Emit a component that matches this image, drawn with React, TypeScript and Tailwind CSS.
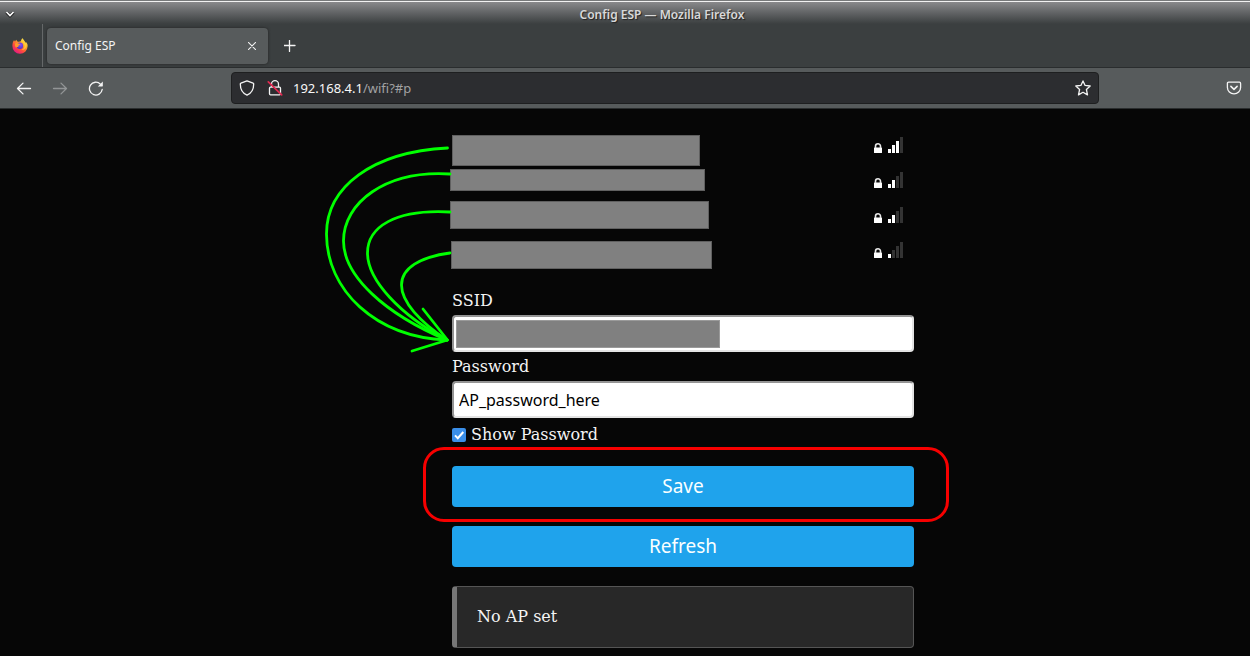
import { useState } from "react";

function FirefoxLogo() {
  return (
    <svg viewBox="0 0 16 16" className="size-4" aria-hidden="true">
      <defs>
        <linearGradient id="flame" x1="0.85" y1="0.05" x2="0.2" y2="0.95">
          <stop offset="0" stopColor="#fff44f" />
          <stop offset="0.35" stopColor="#ffa32a" />
          <stop offset="0.65" stopColor="#ff4f3a" />
          <stop offset="1" stopColor="#e31587" />
        </linearGradient>
        <radialGradient id="globe" cx="0.6" cy="0.35" r="0.7">
          <stop offset="0" stopColor="#8a50f5" />
          <stop offset="1" stopColor="#4a2fc0" />
        </radialGradient>
      </defs>
      <path
        d="M15.4 6.2c-.4-1-1.1-1.8-1.8-2.1.3.6.5 1 .5 1.3C13.300 3.600 11.800 2.600 10.700.2c-1 .6-1.700 1.900-1.800 3.100-.7 0-1.400.2-2 .5C5.600 3.600 4.700 3.300 4.500 1.700c-.7.4-1.200 1-1.400 1.700-.4 0-.9-.6-1-1.400C1 3.300.4 5.600.4 8a7.600 7.600 0 0 0 15.200.3c0-.7 0-1.400-.2-2.100z"
        fill="url(#flame)"
      />
      <circle cx="7.9" cy="7.800" r="3.200" fill="url(#globe)" />
      <path d="M3.200 5.400c1.300-.7 2.700-.4 3.600.2.500.4 1.600.4 1.600.4 0 .7-1.500 1-1.800 1.500-.2.600.1 1.400-.7 1.600-.8-.2-1.500 0-1.900.5-1-1.200-1.300-2.900-.8-4.200z" fill="#ff9a2c" />
      <path d="M9.300 3.400c2.300.7 3.700 2.800 3.200 5.200-.3 1.700-1.700 3-3.300 3.300 3 .7 5.300-1.600 5.200-4.300-.1-2.300-2.200-4.300-5.100-4.200z" fill="#ffd43a" opacity="0.75" />
    </svg>
  );
}

const line = {
  fill: "none",
  stroke: "currentColor",
  strokeWidth: 1.3,
  strokeLinecap: "round" as const,
  strokeLinejoin: "round" as const,
};

function Arrow({ flip = false }: { flip?: boolean }) {
  return (
    <svg viewBox="0 0 16 16" className={flip ? "size-4 -scale-x-100" : "size-4"} aria-hidden="true">
      <path d="M14.500 8.500H1.600M7 3.100 1.500 8.500 7 13.900" {...line} />
    </svg>
  );
}

function Reload() {
  return (
    <svg viewBox="0 0 16 16" className="size-4" aria-hidden="true">
      <path d="M14.200 9.500A6.400 6.400 0 1 1 12.400 4.100" {...line} />
      <path d="M14.800 1.500v4.600c0 .3-.2.500-.5.500H9.800z" fill="currentColor" />
    </svg>
  );
}

function Shield() {
  return (
    <svg viewBox="0 0 16 16" className="size-4" aria-hidden="true">
      <path d="M8 .9 14.100 3.200c.4.100.6.500.6.900C14.700 9.500 12 13.500 8 15.200 4 13.500 1.300 9.500 1.300 4.100c0-.4.2-.8.6-.9z" {...line} />
    </svg>
  );
}

function InsecureLock() {
  return (
    <svg viewBox="0 0 16 16" className="size-4" aria-hidden="true">
      <path d="M4.500 7V4.200a3.500 3.500 0 0 1 7 0V7M3.500 7.200h9c.6 0 1 .4 1 1v5.600c0 .6-.4 1-1 1h-9c-.6 0-1-.4-1-1V8.200c0-.6.4-1 1-1z" {...line} />
      <path d="M1.300 1.800 14.700 14.800" stroke="#e22850" strokeWidth="1.700" strokeLinecap="round" />
    </svg>
  );
}

function Star() {
  return (
    <svg viewBox="0 0 16 16" className="size-4" aria-hidden="true">
      <path d="M8 .9 10.100 5.400 15.200 6 11.400 9.500 12.500 14.900 8 12.300 3.500 14.900 4.600 9.500.8 6 5.900 5.400z" {...line} />
    </svg>
  );
}

function Pocket() {
  return (
    <svg viewBox="0 0 16 16" className="size-4" aria-hidden="true">
      <path d="M2.600 2.200h10.800c.7 0 1.200.5 1.200 1.200V7.500a6.600 6.400 0 0 1-13.200 0V3.400c0-.7.500-1.200 1.200-1.200z" {...line} />
      <path d="M4.900 6.400 8 9.300 11.100 6.400" {...line} strokeWidth={1.600} />
    </svg>
  );
}

function Padlock() {
  return (
    <svg viewBox="0 0 8 10" className="h-[10px] w-2" aria-hidden="true">
      <rect x="0" y="4.500" width="8" height="5.500" rx="0.600" fill="#fff" />
      <path d="M1.500 5V3.300a2.500 2.500 0 0 1 5 0V5" fill="none" stroke="#e8e8e8" strokeWidth="1.600" />
    </svg>
  );
}

function Signal({ level }: { level: number }) {
  return (
    <svg viewBox="0 0 15 16" className="h-4 w-[15px]" role="img" aria-label={`Signal ${level} of 4`}>
      {[1, 2, 3, 4].map((n) => (
        <rect key={n} x={(n - 1) * 4} y={16 - n * 4} width="3" height={n * 4} fill={n <= level ? "#fff" : "#333"} />
      ))}
    </svg>
  );
}

const networks = [
  { level: 3, cover: "left-0 top-[6px] h-[31px] w-[248px]" },
  { level: 2, cover: "-left-[2px] top-[5px] h-[22px] w-[255px]" },
  { level: 2, cover: "-left-[2px] top-[2px] h-7 w-[259px]" },
  { level: 1, cover: "-left-px top-[7px] h-7 w-[261px]" },
];

const field =
  "block h-[37px] w-full rounded border-2 border-t-[#949494] border-r-[#e3e3e3] border-b-[#e3e3e3] border-l-[#949494] bg-white px-[5px] font-['Noto_Sans',sans-serif] text-base text-black outline-none";
const action =
  "block w-full rounded bg-[#1fa3ec] font-['Noto_Sans',sans-serif] text-[19px] leading-[41px] text-[#faffff]";

export default function App() {
  const [password, setPassword] = useState("AP_password_here");
  const [ssid, setSsid] = useState("");
  const [show, setShow] = useState(true);

  return (
    <div className="flex min-h-screen flex-col bg-[#060606] font-['Noto_Sans',sans-serif] text-[#f4f4f4]">
      <header className="relative flex h-6 items-center border-t border-[#77797a] bg-linear-to-b from-[#8d8d8f] to-[#3b3f40] px-[5px] shadow-[inset_0_1px_0_#f2f2f2]">
        <button type="button" aria-label="Window menu" className="h-4 w-[10px]">
          <svg viewBox="0 0 10 16" className="h-4 w-[10px]" aria-hidden="true">
            <path d="M1.500 7.500 5 11 8.500 7.500" fill="none" stroke="#222" strokeWidth="3" />
            <path d="M1.500 7 5 10.500 8.500 7" fill="none" stroke="#fff" strokeWidth="1.600" />
          </svg>
        </button>
        <h1 className="flex-1 pt-1 pl-[64px] text-center text-xs leading-5 font-semibold text-[#d8d8d8] [text-shadow:1px_1px_1px_#222]">
          Config ESP — Mozilla Firefox
        </h1>
      </header>

      <div className="flex h-11 items-stretch border-b border-[#2a2d2e] bg-[#3b3f40]">
        <button type="button" aria-label="Firefox View" className="flex w-[43px] items-center justify-center border-r border-[#656869] pr-[3px]">
          <FirefoxLogo />
        </button>
        <div className="mt-1 mb-[3px] ml-1 flex w-[221px] items-center justify-between rounded bg-[#575b5c] pr-2 pl-2 shadow-[0_0_3px_#222]">
          <span className="text-xs leading-[18px]">Config ESP</span>
          <button type="button" aria-label="Close tab" className="p-1">
            <svg viewBox="0 0 10 10" className="size-2" aria-hidden="true">
              <path d="M.5.500 9.500 9.500M9.500.500.500 9.500" {...line} />
            </svg>
          </button>
        </div>
        <button type="button" aria-label="New tab" className="ml-4 pt-px">
          <svg viewBox="0 0 12 12" className="size-3" aria-hidden="true">
            <path d="M5.500 .5v11M0 5.500h11" {...line} />
          </svg>
        </button>
      </div>

      <nav className="flex h-[41px] items-center border-b border-[#2a2d2e] bg-[#575b5c]">
        <div className="flex w-[231px] gap-5 pl-4">
          <button type="button" aria-label="Back"><Arrow /></button>
          <button type="button" aria-label="Forward" className="text-[#929596]" disabled><Arrow flip /></button>
          <button type="button" aria-label="Reload"><Reload /></button>
        </div>
        <div className="flex h-8 min-w-0 flex-1 items-center rounded border border-[#1e1f20] bg-[#2c2d30] px-[7px]">
          <Shield />
          <span className="ml-3"><InsecureLock /></span>
          <a href="#p" className="ml-[10px] flex-1 text-[13px] leading-5 text-[#a2a2a3]">
            <span className="text-[#f8f8f8]">192.168.4.1</span>/wifi?#p
          </a>
          <button type="button" aria-label="Bookmark this page"><Star /></button>
        </div>
        <div className="flex w-[151px] justify-end pr-2">
          <button type="button" aria-label="Save to Pocket"><Pocket /></button>
        </div>
      </nav>

      <main className="flex-1 pt-5 pl-[116px] font-['DejaVu_Serif',serif] text-base">
        <div className="relative mx-auto w-full max-w-[462px]">
          <ul>
            {networks.map((network, index) => (
              <li key={index} className="relative flex h-[35px] items-start justify-end pt-2 pr-[11px]">
                <span className={`absolute border border-[#606060] bg-[#808080] ${network.cover}`} />
                <span className="flex items-end gap-[6px]">
                  <Padlock />
                  <Signal level={network.level} />
                </span>
              </li>
            ))}
          </ul>

          <form className="pt-[17px]" onSubmit={(event) => event.preventDefault()}>
            <label htmlFor="ssid" className="block leading-[29px]">SSID</label>
            <div className="relative">
              <input id="ssid" value={ssid} onChange={(event) => setSsid(event.target.value)} className={field} />
              <span className="absolute top-[5px] left-1 h-7 w-[264px] border border-[#9a9a9a] bg-[#808080]" />
            </div>
            <label htmlFor="password" className="block leading-[29px]">Password</label>
            <input
              id="password"
              type={show ? "text" : "password"}
              value={password}
              onChange={(event) => setPassword(event.target.value)}
              className={field}
            />
            <label className="flex h-[33px] items-center gap-[5px]">
              <span className="relative flex">
                <input
                  type="checkbox"
                  checked={show}
                  onChange={(event) => setShow(event.target.checked)}
                  className="size-[14px] appearance-none rounded-xs bg-white checked:bg-[#3a8ee8]"
                />
                {show && (
                  <svg viewBox="0 0 14 14" className="pointer-events-none absolute inset-0 size-[14px]" aria-hidden="true">
                    <path d="M3 7.400 5.800 10.200 11.300 4" fill="none" stroke="#fff" strokeWidth="2" />
                  </svg>
                )}
              </span>
              Show Password
            </label>
            <div className="relative mt-[15px]">
              <button type="submit" className={action}>Save</button>
              <span className="pointer-events-none absolute -top-[19px] -right-[35px] -bottom-[15px] -left-[29px] rounded-[21px] border-3 border-[#f60000]" />
            </div>
            <button type="button" className={`mt-[19px] ${action}`}>Refresh</button>
          </form>

          <p className="mt-[19px] rounded border border-l-5 border-[#555] border-l-[#777] bg-[#282828] px-5 py-[18px] leading-6">
            No AP set
          </p>

          <svg
            viewBox="310 125 146 240"
            className="pointer-events-none absolute -top-1 -left-[142px] h-[240px] w-[146px]"
            aria-hidden="true"
          >
            <g fill="none" stroke="#0f0" strokeWidth="2.800" strokeLinecap="round" strokeLinejoin="round">
              <path d="M447.500 148C372 152 326.500 187 326.500 234C326.500 290 375 337 447 340" />
              <path d="M450 174C385 170 343.500 203 343.500 241C343.500 276 385 314 447 340" />
              <path d="M450 212C395 209 367.500 227 367.500 253C367.500 280 400 315 447 340" />
              <path d="M450 253C420 257 401.500 268 401.500 285C401.500 302 420 322 447 340" />
              <path d="M423 309 447.500 340 412 351" />
            </g>
          </svg>
        </div>
      </main>
    </div>
  );
}
